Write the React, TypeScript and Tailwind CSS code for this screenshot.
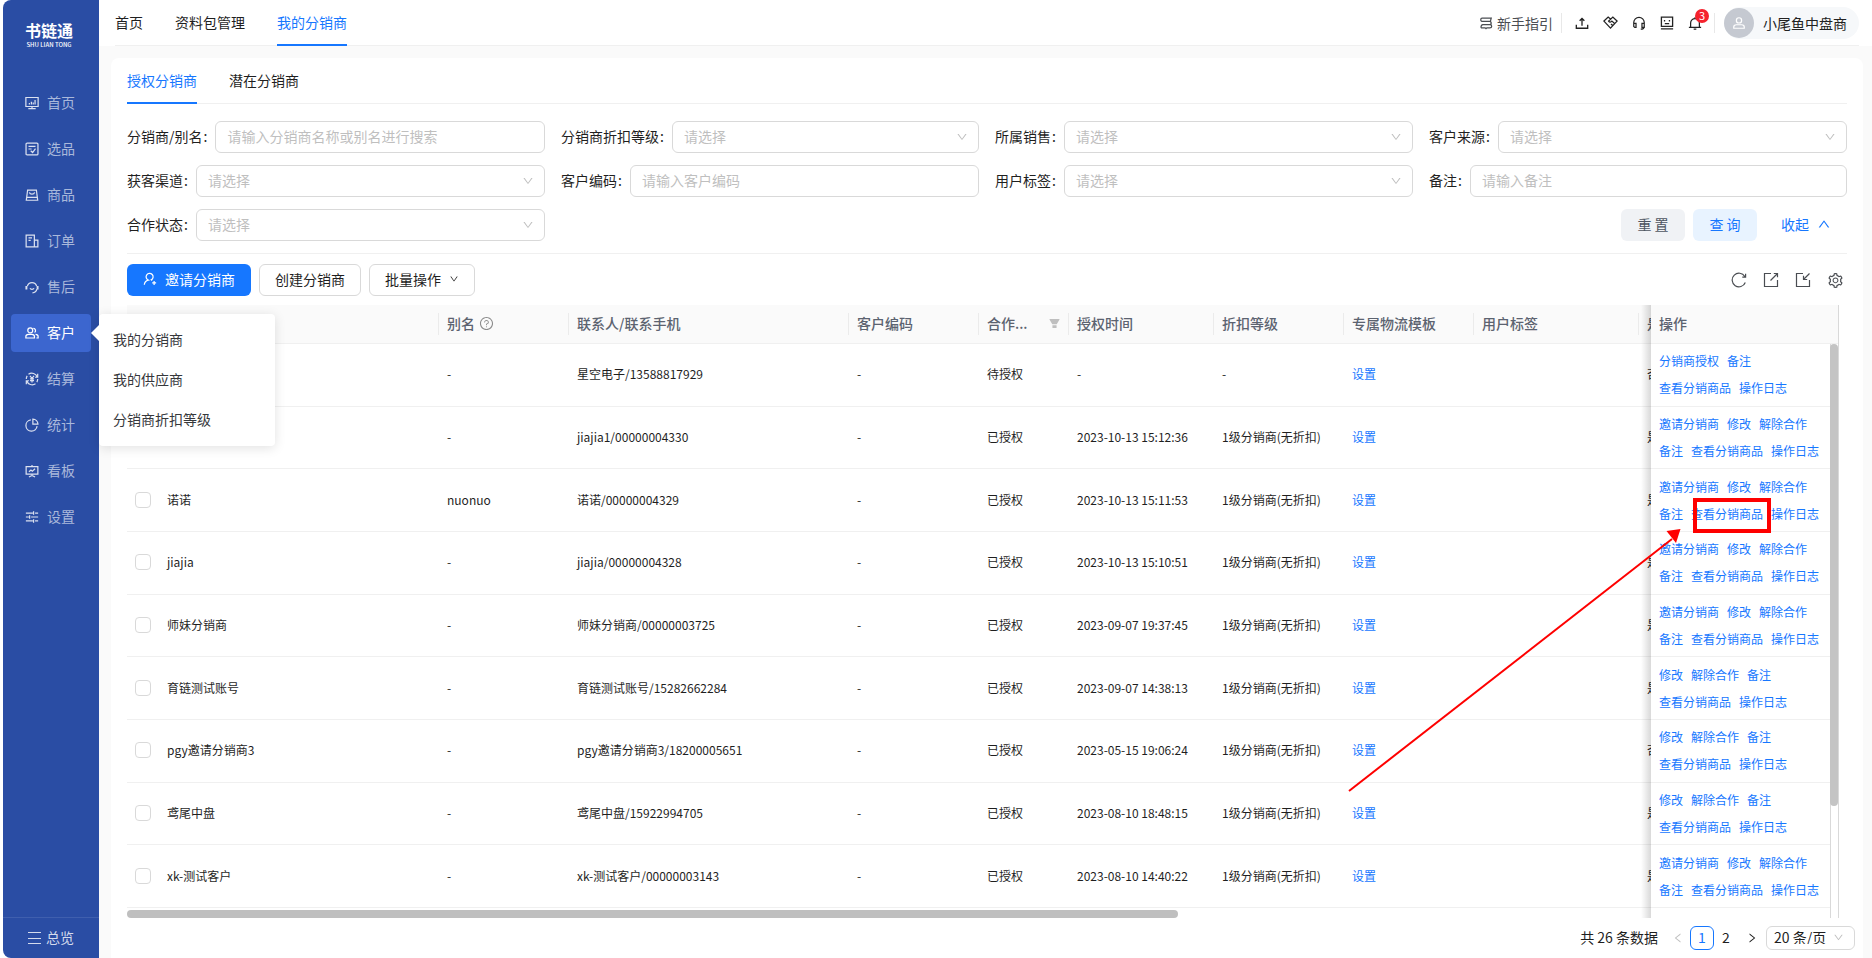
import type { ReactNode, SVGProps } from "react";
import {
  AiFillFilter,
  AiOutlineDown,
  AiOutlineLeft,
  AiOutlineQuestionCircle,
  AiOutlineRight,
  AiOutlineSetting,
  AiOutlineUp,
} from "react-icons/ai";

function Icon({ children, size = 14, ...rest }: SVGProps<SVGSVGElement> & { size?: number }) {
  return (
    <svg
      width={size}
      height={size}
      viewBox="0 0 16 16"
      fill="none"
      stroke="currentColor"
      strokeWidth="1.4"
      aria-hidden="true"
      className="shrink-0"
      {...rest}
    >
      {children}
    </svg>
  );
}

const icons: Record<string, ReactNode> = {
  home: (
    <Icon>
      <path d="M1 1.700h14v10.300H1zM8 12v2.200M3.800 14.300h8.400M5 9.800V8M7.300 9.800V6.500M9.400 9.800V7.500M11.500 9.800V4.500" />
    </Icon>
  ),
  pick: (
    <Icon>
      <rect x="1.200" y="1.200" width="13.600" height="13.600" rx="1.200" />
      <path d="M4 5h8M4 8h3.500M6.500 10l2.200 2L12 7.500" />
    </Icon>
  ),
  goods: (
    <Icon>
      <path d="M3 2.300h10l1.500 11.700H1.500zM2 10.800h12M5 5c.6 2.800 5.400 2.800 6 0" />
    </Icon>
  ),
  order: (
    <Icon>
      <path d="M1.300 1.300h9.400v13.400H1.300zM10.700 7h4v7.700h-4M4 4.500h4M4 7.300h2.500" />
    </Icon>
  ),
  service: (
    <Icon>
      <path d="M2.700 7a5.500 5.500 0 0 1 10.600 0M13.600 10.500c-.6 2.500-2.600 4-5.100 4.200" />
      <path d="M1.600 6.800v4M14.400 6.800v4" strokeWidth="2.200" />
      <path d="M5.700 9.500c.8 1.500 3.800 1.500 4.600 0" />
    </Icon>
  ),
  customer: (
    <Icon>
      <circle cx="6" cy="5" r="2.800" />
      <path d="M1 13.700v-1.600c0-1.800 1.400-2.500 3-2.500h3.800c1.600 0 3 .7 3 2.500v1.600zM9.500 2.700a2.600 2.600 0 0 1 1.500 4.700M12 9.500c1.800 0 3 .9 3 2.600v1.600h-2" />
    </Icon>
  ),
  settle: (
    <Icon>
      <path d="M4 2.500a6.600 6.600 0 0 1 10 3.500M12 13.500A6.600 6.600 0 0 1 2 10M1.500 8a6.500 6.500 0 0 1 1-3.500M14.500 8a6.500 6.500 0 0 1-1 3.500M14.500 2v4h-3M1.500 14v-4h3" />
      <path d="M5.700 4.500 8 7.200l2.300-2.700M8 7.200V12M5.700 7.800h4.600M5.700 9.900h4.600" />
    </Icon>
  ),
  stats: (
    <Icon>
      <path d="M6.700 2.200A6.400 6.400 0 1 0 13.800 9.300M9 1.200V7h5.800A6 6 0 0 0 9 1.200z" />
    </Icon>
  ),
  board: (
    <Icon>
      <path d="M1.300 3h13.400v8.500H1.300zM8 1v2M8 11.500v2M4.500 14.800 8 13l3.500 1.800M4.500 8.800l2.300-2 1.600 1.400L11.500 5.500" />
    </Icon>
  ),
  config: (
    <Icon>
      <path d="M1 3.500h8M11.500 3.500H15M9.800 1.500v4M1 8h3.500M7 8h8M5.300 6v4M1 12.500h8M11.500 12.500H15M9.800 10.500v4" />
    </Icon>
  ),
};

const menu = [
  ["home", "首页"],
  ["pick", "选品"],
  ["goods", "商品"],
  ["order", "订单"],
  ["service", "售后"],
  ["customer", "客户"],
  ["settle", "结算"],
  ["stats", "统计"],
  ["board", "看板"],
  ["config", "设置"],
];

function Sidebar() {
  return (
    <aside className="relative z-20 flex w-24 shrink-0 flex-col rounded-l-lg bg-[#2a4da4]">
      <div className="flex flex-col items-center pt-[18px] pr-1 text-white">
        <span className="text-[16px] leading-6 font-bold">书链通</span>
        <span className="text-[6px] leading-none font-medium">SHU LIAN TONG</span>
      </div>
      <nav className="mt-9 flex flex-col gap-2 pr-2 pl-2">
        {menu.map(([icon, label]) => {
          const active = icon === "customer";
          return (
            <div key={icon} className="relative">
              <a
                href="#"
                className={
                  active
                    ? "flex h-[38px] items-center gap-2 rounded bg-[#3c66cf] pl-[14px] text-sm text-white"
                    : "flex h-[38px] items-center gap-2 rounded pl-[14px] text-sm text-[#a9b8db]"
                }
              >
                <span className={active ? "text-white" : "text-[#dbe1f0]"}>{icons[icon]}</span>
                <span className="pb-0.5">{label}</span>
              </a>
              {active && <CustomerMenu />}
            </div>
          );
        })}
      </nav>
      <button type="button" className="mt-auto flex h-[41px] items-center gap-1 border-t border-[#3f5fae] pl-6 text-[14px] text-[#d4dbed]">
        <svg width="15" height="14" viewBox="0 0 15 14" stroke="currentColor" aria-hidden="true">
          <path d="M1 1.500h13M1 7.500h13M1 12.500h13" />
        </svg>
        <span className="pb-0.5">总览</span>
      </button>
    </aside>
  );
}

function CustomerMenu() {
  return (
    <div className="absolute top-0 left-full ml-2 w-44 rounded bg-white pt-[5px] pb-[7px] shadow-[0_2px_12px_rgba(0,0,0,0.12)]">
      <svg className="absolute top-[11px] -left-2" width="8" height="16" viewBox="0 0 8 16" aria-hidden="true">
        <path d="M8 0v16L0 8z" fill="#fff" />
      </svg>
      {["我的分销商", "我的供应商", "分销商折扣等级"].map((t) => (
        <a key={t} href="#" className="block h-10 px-[14px] text-sm leading-10 text-[#36383c]">
          {t}
        </a>
      ))}
    </div>
  );
}

function TopBar() {
  return (
    <header className="bg-white pr-[13px] pl-4">
      <div className="flex h-[46px] items-stretch justify-between border-b border-[#f0f0f0]">
        <nav className="flex gap-8 text-sm">
          <a href="#" className="pt-3">首页</a>
          <a href="#" className="pt-3">资料包管理</a>
          <a href="#" className="-mb-px border-b-2 border-[#1677ff] pt-3 text-[#1677ff]">我的分销商</a>
        </nav>
        <div className="flex items-center">
          <a href="#" className="flex items-center gap-1 text-sm text-[#4a4d52]">
            <Icon>
              <path d="M3.500 2.300H14l-1 3.900H4.500C2.500 6.200 2 5.200 2 4.200s.6-1.900 1.500-1.900M12.500 6.200c1.800.5 2.200 3.300 0 3.600M4.500 9.800h8c1.300 0 2 .8 2 1.800s-.7 1.900-2 1.900H9l-1 1-1-1H2.200M4.500 9.800C3 9.800 2.200 10.800 2.200 13.500" />
            </Icon>
            新手指引
          </a>
          <span className="ml-2 h-5 w-px bg-[#e8e8e8]" />
          <div className="flex items-center gap-[14px] pr-3 pl-[13px] text-[#222]">
            <button type="button" aria-label="上传">
              <Icon><path d="M1.500 10v4h13v-4M8 11V3M5.300 5.500 8 2.800l2.700 2.700" strokeWidth="1.500" /></Icon>
            </button>
            <button type="button" aria-label="合作">
              <Icon size={15}><path d="M8 4.200 5.500 2.200 1 6.500l7 7.500 7-7.500-4.500-4.300L6 6.500c1 1.500 2.400 1.200 3.500 0l3.500 3M8.500 9.500l2.500 2.300" strokeWidth="1.400" /></Icon>
            </button>
            <button type="button" aria-label="客服">
              <Icon><path d="M2 11V7.500a6 6 0 0 1 12 0V11M2 8.500h2.600V13H3.200L2 12zM14 8.500h-2.600V13H14zM13.500 13c0 1.500-1.500 2-3.500 2" strokeWidth="1.400" /></Icon>
            </button>
            <button type="button" aria-label="反馈">
              <Icon><path d="M1.600 1.300h12.800v10.500H1.600zM5.200 4.500v1.700M10.800 4.500v1.700M5.500 8.700h5M1 14.700h14" strokeWidth="1.500" /></Icon>
            </button>
            <button type="button" aria-label="消息" className="relative">
              <Icon><path d="M1 13h14M3 13V8a5 5 0 0 1 10 0v5M8 1.500V3M6.500 15h3" strokeWidth="1.400" /></Icon>
              <span className="absolute -top-[7px] left-[7px] flex size-[14px] items-center justify-center rounded-full bg-[#f5222d] text-[11px] leading-none text-white">
                3
              </span>
            </button>
          </div>
          <span className="h-5 w-px bg-[#e8e8e8]" />
          <button type="button" className="ml-[9px] flex h-8 items-center gap-[9px] rounded-full bg-[#f6f8fa] pr-3 text-sm text-[#222]">
            <span className="flex size-[30px] items-center justify-center rounded-full bg-[#c5c9d1] text-white">
              <Icon>
                <circle cx="8" cy="5" r="3" />
                <path d="M2 14v-1.500c0-1.600 1.200-2.500 3-2.500h6c1.800 0 3 .9 3 2.500V14z" />
              </Icon>
            </span>
            小尾鱼中盘商
          </button>
        </div>
      </div>
    </header>
  );
}

const fields = [
  { id: "name", label: "分销商/别名", hint: "请输入分销商名称或别名进行搜索", input: true },
  { id: "level", label: "分销商折扣等级", hint: "请选择", input: false },
  { id: "sales", label: "所属销售", hint: "请选择", input: false },
  { id: "source", label: "客户来源", hint: "请选择", input: false },
  { id: "channel", label: "获客渠道", hint: "请选择", input: false },
  { id: "code", label: "客户编码", hint: "请输入客户编码", input: true },
  { id: "tag", label: "用户标签", hint: "请选择", input: false },
  { id: "remark", label: "备注", hint: "请输入备注", input: true },
  { id: "state", label: "合作状态", hint: "请选择", input: false },
];

const control =
  "block h-8 w-full appearance-none rounded-md border border-[#d9d9d9] bg-white px-[11px] pb-0.5 text-sm text-[#bfbfbf] placeholder:text-[#bfbfbf] outline-none";

function Filters() {
  return (
    <form className="grid grid-cols-4 gap-x-4 gap-y-3 border-b border-[#f0f0f0] pt-[17px] pb-3">
      {fields.map((f) => (
        <div key={f.id} className="flex items-center">
          <label htmlFor={f.id} className="shrink-0 pr-2 pb-0.5 text-sm text-[#1f1f1f]">
            {f.label}
            <span className="ml-px">:</span>
          </label>
          {f.input ? (
            <input id={f.id} placeholder={f.hint} className={control} />
          ) : (
            <div className="relative flex-1">
              <select id={f.id} className={control}>
                <option>{f.hint}</option>
              </select>
              <AiOutlineDown size={12} className="pointer-events-none absolute top-[10px] right-[11px] text-[#bfbfbf]" />
            </div>
          )}
        </div>
      ))}
      <div className="col-span-3 flex items-center justify-end gap-2 text-sm">
        <button type="button" className="h-8 w-16 rounded-md bg-[#f0f2f5] pb-0.5 text-[#4e5561]">重 置</button>
        <button type="button" className="h-8 w-16 rounded-md bg-[#e8f3ff] pb-0.5 text-[#1677ff]">查 询</button>
        <button type="button" className="flex h-8 items-center gap-2 px-4 pb-0.5 text-[#1677ff]">
          收起
          <AiOutlineUp size={14} />
        </button>
      </div>
    </form>
  );
}

function Toolbar() {
  return (
    <div className="flex items-center justify-between pt-[10px] pb-[9px]">
      <div className="flex gap-2 text-sm">
        <button type="button" className="flex h-8 items-center gap-2 rounded-md bg-[#1677ff] px-4 pb-0.5 text-white">
          <Icon>
            <path d="M1.500 14.500c.3-3 2.200-4.700 4.500-5.300A4 4 0 1 1 9.500 9l1 .6M10.500 12.500H15M12.700 10.300v4.500" />
          </Icon>
          邀请分销商
        </button>
        <button type="button" className="h-8 rounded-md border border-[#d9d9d9] px-[15px] pb-0.5">创建分销商</button>
        <button type="button" className="flex h-8 items-center gap-2 rounded-md border border-[#d9d9d9] px-[15px] pb-0.5">
          批量操作
          <AiOutlineDown size={10} />
        </button>
      </div>
      <div className="flex gap-4 pr-[3px] text-[#4a4d52]">
        <button type="button" aria-label="刷新">
          <Icon size={16} strokeWidth="1.200"><path d="M14.300 10.500A6.800 6.800 0 1 1 13.800 4.500M14.600 1.800v3.300h-3.300" /></Icon>
        </button>
        <button type="button" aria-label="导出">
          <Icon size={16} strokeWidth="1.200"><path d="M8 1.500H1.500v13h13V8M7.500 8.500l7-7M10.800 1.500h3.700v3.700" /></Icon>
        </button>
        <button type="button" aria-label="导入">
          <Icon size={16} strokeWidth="1.200"><path d="M8 1.500H1.500v13h13V8M14.500 1.500l-6 6M8.500 3.800v3.700h3.700" /></Icon>
        </button>
        <button type="button" aria-label="列设置">
          <AiOutlineSetting size={17} />
        </button>
      </div>
    </div>
  );
}

const full = ["邀请分销商", "修改", "解除合作", "备注", "查看分销商品", "操作日志"];
const edit = ["修改", "解除合作", "备注", "查看分销商品", "操作日志"];

const rows = [
  { name: "", alias: "-", contact: "星空电子/13588817929", state: "待授权", time: "-", level: "-", flag: "否", actions: ["分销商授权", "备注", "查看分销商品", "操作日志"] },
  { name: "", alias: "-", contact: "jiajia1/00000004330", state: "已授权", time: "2023-10-13 15:12:36", level: "1级分销商(无折扣)", flag: "是", actions: full },
  { name: "诺诺", alias: "nuonuo", contact: "诺诺/00000004329", state: "已授权", time: "2023-10-13 15:11:53", level: "1级分销商(无折扣)", flag: "是", actions: full },
  { name: "jiajia", alias: "-", contact: "jiajia/00000004328", state: "已授权", time: "2023-10-13 15:10:51", level: "1级分销商(无折扣)", flag: "是", actions: full },
  { name: "师妹分销商", alias: "-", contact: "师妹分销商/00000003725", state: "已授权", time: "2023-09-07 19:37:45", level: "1级分销商(无折扣)", flag: "是", actions: full },
  { name: "育链测试账号", alias: "-", contact: "育链测试账号/15282662284", state: "已授权", time: "2023-09-07 14:38:13", level: "1级分销商(无折扣)", flag: "是", actions: edit },
  { name: "pgy邀请分销商3", alias: "-", contact: "pgy邀请分销商3/18200005651", state: "已授权", time: "2023-05-15 19:06:24", level: "1级分销商(无折扣)", flag: "否", actions: edit },
  { name: "鸢尾中盘", alias: "-", contact: "鸢尾中盘/15922994705", state: "已授权", time: "2023-08-10 18:48:15", level: "1级分销商(无折扣)", flag: "是", actions: edit },
  { name: "xk-测试客户", alias: "-", contact: "xk-测试客户/00000003143", state: "已授权", time: "2023-08-10 14:40:22", level: "1级分销商(无折扣)", flag: "是", actions: full },
];

function Th({ children, last = false }: { children?: ReactNode; last?: boolean }) {
  return (
    <th className="overflow-hidden border-b border-[#f0f0f0] p-0 text-left font-medium whitespace-nowrap">
      <div className={last ? "flex h-[22px] items-center pb-0.5 pl-2" : "flex h-[22px] items-center border-r border-[#ebebeb] pr-2 pb-0.5 pl-2"}>
        {children}
      </div>
    </th>
  );
}

function DistributorTable() {
  return (
    <div className="relative mr-2 min-h-0 flex-1 overflow-hidden">
      <table className="h-[603px] w-full table-fixed border-separate border-spacing-0">
        <colgroup>
          <col className="w-8" />
          <col />
          <col className="w-[130px]" />
          <col className="w-[280px]" />
          <col className="w-[130px]" />
          <col className="w-[90px]" />
          <col className="w-[145px]" />
          <col className="w-[130px]" />
          <col className="w-[130px]" />
          <col className="w-[165px]" />
          <col className="w-3" />
          <col className="w-[188px]" />
        </colgroup>
        <thead className="h-[39px] bg-[#fafafa] text-sm text-[#5c6370]">
          <tr className="h-[39px]">
            <Th last><input type="checkbox" aria-label="全选" className="size-4" /></Th>
            <Th />
            <Th>别名<AiOutlineQuestionCircle size={15} className="ml-1 text-[#8c8c8c]" /></Th>
            <Th>联系人/联系手机</Th>
            <Th>客户编码</Th>
            <Th>合作...<AiFillFilter size={13} className="mr-[-1px] ml-auto text-[#bfbfbf]" /></Th>
            <Th>授权时间</Th>
            <Th>折扣等级</Th>
            <Th>专属物流模板</Th>
            <Th>用户标签</Th>
            <Th last>是</Th>
            <Th last>操作</Th>
          </tr>
        </thead>
        <tbody className="text-xs text-[#1f1f1f] [&_td]:overflow-hidden [&_td]:border-b [&_td]:border-[#f0f0f0] [&_td]:pt-0 [&_td]:pb-px [&_td]:pl-2 [&_td]:whitespace-nowrap">
          {rows.map((r) => (
            <tr key={r.contact}>
              <td>
                <input
                  type="checkbox"
                  aria-label={r.contact}
                  className="block size-4 appearance-none rounded border border-[#d9d9d9] bg-white"
                />
              </td>
              <td>{r.name}</td>
              <td>{r.alias}</td>
              <td>{r.contact}</td>
              <td>-</td>
              <td>{r.state}</td>
              <td>{r.time}</td>
              <td>{r.level}</td>
              <td><a href="#" className="text-[#1677ff]">设置</a></td>
              <td></td>
              <td>{r.flag}</td>
              <td>
                <div className="flex flex-wrap gap-x-2 pr-4 leading-[27px] text-[#1677ff]">
                  {r.actions.map((a) => (
                    <a key={a} href="#">{a}</a>
                  ))}
                </div>
              </td>
            </tr>
          ))}
        </tbody>
      </table>
      <div className="absolute inset-y-0 right-[188px] w-[10px] bg-linear-to-l from-black/15 to-transparent" />
      <div className="absolute top-[39px] right-0 bottom-0 w-[9px] border-x border-[#d9d9d9] bg-white">
        <div className="-ml-px h-[462px] rounded-full bg-[#c4c4c4]" />
      </div>
      <div className="absolute top-0 right-0 h-[39px] w-px bg-[#d9d9d9]" />
      <div className="absolute bottom-0 left-0 h-2 w-[61.4%] rounded-full bg-[#bfbfbf]" />
    </div>
  );
}

function Pagination() {
  return (
    <div className="-mr-2 flex h-10 shrink-0 items-center justify-end text-sm text-[#1f1f1f]">
      <span className="pb-0.5">共 26 条数据</span>
      <button type="button" aria-label="上一页" className="ml-[14px] text-[#bfbfbf]"><AiOutlineLeft size={12} /></button>
      <button type="button" className="ml-[6px] size-6 rounded-md border border-[#1677ff] pb-0.5 leading-none text-[#1677ff]">1</button>
      <button type="button" className="h-6 w-6 pb-0.5">2</button>
      <button type="button" aria-label="下一页" className="mx-0.5 flex w-6 justify-center"><AiOutlineRight size={12} /></button>
      <div className="relative">
        <select aria-label="每页条数" className="block h-6 w-[89px] appearance-none rounded-md border border-[#d9d9d9] pb-0.5 pl-[7px] leading-none outline-none">
          <option>20 条/页</option>
        </select>
        <AiOutlineDown size={11} className="pointer-events-none absolute top-[6px] right-[11px] text-[#bfbfbf]" />
      </div>
    </div>
  );
}

export default function App() {
  return (
    <div className="relative flex h-screen overflow-hidden bg-white pl-[3px] font-['Noto_Sans_CJK_SC',sans-serif] text-[#1f1f1f]">
      <Sidebar />
      <div className="flex min-w-0 flex-1 flex-col bg-[#fafafa]">
        <TopBar />
        <main className="mt-3 mr-[9px] ml-3 flex min-h-0 flex-1 flex-col rounded-t-lg bg-white px-4">
          <nav className="flex h-[46px] shrink-0 gap-8 border-b border-[#f0f0f0] text-sm">
            <a href="#" className="-mb-px border-b-2 border-[#1677ff] pt-3 text-[#1677ff]">授权分销商</a>
            <a href="#" className="pt-3">潜在分销商</a>
          </nav>
          <Filters />
          <Toolbar />
          <DistributorTable />
          <Pagination />
        </main>
      </div>
      <svg className="pointer-events-none absolute top-[495px] right-[99px] z-30" width="426" height="298" viewBox="0 0 426 298" fill="none" stroke="#fe0000" aria-hidden="true">
        <rect x="348" y="5" width="74" height="31" strokeWidth="4" />
        <path d="M2 296 325 44" strokeWidth="2" />
        <path d="M333.500 34 319.500 36l9.500 12z" fill="#fe0000" stroke="none" />
      </svg>
    </div>
  );
}
